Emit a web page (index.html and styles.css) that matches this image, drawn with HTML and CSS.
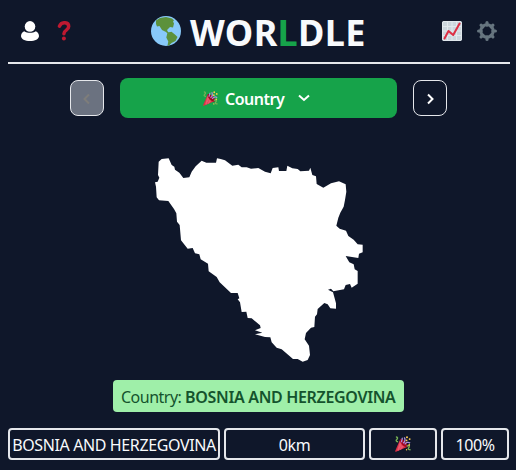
FILE: index.html
```
<!DOCTYPE html>
<html lang="en">
<head>
<meta charset="utf-8">
<title>Worldle</title>
<link rel="stylesheet" href="styles.css">
</head>
<body>
<svg class="defs" width="0" height="0" aria-hidden="true">
  <symbol id="party" viewBox="0 0 36 36">
    <path fill="#DD2E44" d="M11.600 7.600 0.400 33.800c-.5 1.400.4 2.100 1.800 1.700L28.400 24z"/>
    <path fill="#EA596E" d="m11 12-6 20 3 1 7-13zm4 9-5 11 4-2 6-6z"/>
    <path fill="#A0041E" d="M11.500 7.500c2-2 8 1.500 12 5.500s7 9.500 5 11.500-8-1-12-5-7-10-5-12z"/>
    <path fill="none" stroke="#AA8DD8" stroke-width="3" d="M18 16c5-3 6-7 3-13m1 16c3-5 8-6 12-3"/>
    <path fill="none" stroke="#77B255" stroke-width="3" d="M2 2c4 0 5 3 2 6s0 5 3 5m19 10c4-3 8-1 5 3s0 5 4 5"/>
    <path fill="none" stroke="#AA8DD8" stroke-width="3" d="M15 14c-2-4 3-5 1-10"/>
    <g fill="#FFCC4D"><circle cx="27" cy="3" r="2.200"/><circle cx="33" cy="7" r="2.200"/><circle cx="26" cy="10" r="2"/><circle cx="32" cy="20" r="2"/><circle cx="26" cy="31" r="1.600"/></g>
  </symbol>
</svg>
<header class="header">
  <svg class="icon user" viewBox="0 0 20 20"><circle cx="10" cy="5.400" r="5.300" fill="#fff"/><path fill="#fff" d="M4.200 10.300C2.500 11 1 13 1 15c0 3 4 5 9 5s9-2 9-5c0-2-1.500-4-3.200-4.700C12.500 12.300 7.500 12.300 4.200 10.300z"/></svg>
  <svg class="icon help" viewBox="0 0 20 20"><path fill="none" stroke="#BE1931" stroke-width="3.500" stroke-linecap="round" d="M5.500 5.200C7.300 .5 14.700 .5 14.700 5.600c0 4-4.800 3-4.800 7.200"/><circle cx="9.900" cy="17.600" r="2" fill="#BE1931"/></svg>
  <svg class="globe" viewBox="0 0 30 30"><circle cx="15" cy="15" r="15" fill="#88C9F9"/><path fill="#5C913B" d="M5 4.500 9 2l6-1 6 1.500 2 2-1 1 1 2-1 4-3-.5-3 3 1 2 2 2-1 1-3-3-4-2-2.500-4L6 10.500 5 8zM16.500 16.500l4-.7 4 3.200 2 2-2 4-4 2-2.500 2.500-1.500 0 .8-4-2-4z"/></svg>
  <h1 class="title">WOR<span class="accent">L</span>DLE</h1>
  <svg class="icon stats" viewBox="0 0 20 20"><rect width="20" height="20" rx="2" fill="#CCD6DD"/><path fill="none" stroke="#E1E8ED" d="M1 5.500h18M1 10h18M1 14.500h18M5.500 1v18M10 1v18M14.500 1v18"/><rect x=".5" y=".5" width="19" height="19" rx="1.500" fill="none" stroke="#E1E8ED"/><path fill="none" stroke="#DD2E44" stroke-width="2" stroke-linecap="round" stroke-linejoin="round" d="m2.500 17.500 4-7.500 4.700 4L17.600 2.500"/></svg>
  <svg class="icon gear" viewBox="0 0 20 20"><circle cx="10" cy="10" r="6.200" fill="none" stroke="#66757F" stroke-width="3"/><path stroke="#66757F" stroke-width="3.200" stroke-linecap="round" d="M10 1.600v2.500M10 15.900v2.500M1.600 10h2.500M15.900 10h2.500M4.100 4.100l1.700 1.700M14.200 14.200l1.700 1.700M4.100 15.900l1.700-1.700M14.200 5.800l1.700-1.700"/></svg>
</header>
<main>
  <nav class="rounds">
    <button class="step off"><svg viewBox="0 0 12 12"><path d="M8 1.500 3.500 6 8 10.500"/></svg></button>
    <button class="round"><svg class="party"><use href="#party"/></svg><span class="round-name">Country</span><svg class="down" viewBox="0 0 12 8"><path d="m1 1.500 5 4.500 5-4.500"/></svg></button>
    <button class="step"><svg viewBox="0 0 12 12"><path d="M4 1.500 8.500 6 4 10.500"/></svg></button>
  </nav>
  <svg class="shape" viewBox="0 0 690 690"><path fill="#fff" d="M41 50 50 42 71 40 80 60 88 65 90 74 103 83 115 99 133 97 140 80 152 64 170 47 184 53 213 53 216 40 227 42 240 46 262 62 280 59 290 67 305 67 318 71 340 69 360 80 377 85 383 69 400 67 402 78 424 78 427 62 442 70 458 72 466 79 492 77 496 68 502 90 513 94 515 117 535 128 558 115 582 109 602 118 604 140 600 165 596 185 586 203 580 218 574 242 584 251 603 257 610 273 626 284 638 298 653 299 653 322 642 326 640 339 602 333 605 338 613 352 626 358 629 373 638 378 638 416 620 428 615 417 602 420 597 433 565 439 558 431 549 434 564 442 573 475 573 491 556 490 548 478 538 474 518 492 516 508 510 515 508 546 498 548 483 564 479 583 492 602 495 630 488 645 473 650 458 642 444 642 410 613 395 608 380 592 376 577 360 576 330 568 352 563 330 556 347 549 345 541 320 520 308 519 304 500 290 501 285 472 278 463 283 460 278 444 258 444 224 412 215 396 191 379 189 356 167 343 163 328 150 325 143 309 128 311 108 286 104 240 96 230 94 205 87 192 70 168 42 166 35 157 33 125 30 112 38 110 43 98 39 90z"/></svg>
  <p class="answer"><span class="label">Country:</span> <b>BOSNIA AND HERZEGOVINA</b></p>
  <div class="guess">
    <div class="cell name"><span>BOSNIA AND HERZEGOVINA</span></div>
    <div class="cell"><span>0km</span></div>
    <div class="cell"><svg class="party big"><use href="#party"/></svg></div>
    <div class="cell"><span>100%</span></div>
  </div>
</main>
</body>
</html>
```
FILE: styles.css
```
* { box-sizing: border-box; }
body {
  margin: 0;
  padding: 8px 6px 0 8px;
  height: 470px;
  overflow: hidden;
  background: #0f172a;
  color: #f8fafc;
  font: 16px/24px "Noto Sans", "Open Sans", sans-serif;
}
svg { display: block; flex: none; }
.defs { position: absolute; }
.header {
  display: flex;
  align-items: center;
  height: 56px;
  padding: 0 12px;
  border-bottom: 2px solid #e5e7eb;
}
.icon { width: 20px; height: 20px; margin-top: -8px; }
.help { margin-left: 14px; }
.globe { width: 30px; height: 30px; margin: -8px 0 0 77px; }
.title {
  width: 261px;
  margin: -5px 0 0 9px;
  font-size: 36px;
  line-height: 40px;
  font-weight: 700;
  letter-spacing: .35px;
  white-space: nowrap;
}
.accent { color: #16a34a; }
.stats { margin-left: -9px; }
.gear { margin-left: 15px; }
.rounds {
  display: flex;
  align-items: center;
  gap: 16px;
  height: 40px;
  margin: 14px 0 0 62px;
}
button { padding: 0; color: #fff; font: inherit; }
.step {
  display: flex;
  align-items: center;
  justify-content: center;
  width: 34px;
  height: 36px;
  border: 1px solid #e5e7eb;
  border-radius: 8px;
  background: none;
}
.step svg { width: 12px; height: 12px; margin-top: 2px; }
.step path, .down path { fill: none; stroke: #fff; stroke-width: 2; }
.off { background: #6b7280; }
.off .off path, .step.off path { stroke: #7e7d7a; }
.round {
  display: flex;
  align-items: center;
  width: 277px;
  height: 40px;
  padding-left: 83px;
  border: 0;
  border-radius: 8px;
  background: #16a34a;
  font-weight: 600;
  letter-spacing: -.5px;
}
.party { width: 15px; height: 15px; }
.round-name { margin: 2px 0 0 7px; width: 73px; text-align: left; }
.down { width: 12px; height: 8px; }
.shape { width: 230px; height: 230px; margin: 27px 0 0 137px; }
.answer {
  width: 291px;
  height: 32px;
  margin: 5px 0 0 105px;
  padding: 5px 8px 0;
  border-radius: 4px;
  background: #9fefa9;
  color: #14532d;
  letter-spacing: -.5px;
  white-space: nowrap;
}
.answer b { font-weight: 600; letter-spacing: -.33px; }
.guess {
  display: grid;
  grid-template-columns: 212px 141px 68px 68px;
  gap: 4px;
  margin-top: 16px;
}
.cell {
  display: flex;
  align-items: center;
  justify-content: center;
  height: 32px;
  border: 2px solid #e5e7eb;
  border-radius: 4px;
  letter-spacing: -.38px;
  white-space: nowrap;
}
.cell span { margin-top: 2px; }
.big { width: 16px; height: 16px; }
```
